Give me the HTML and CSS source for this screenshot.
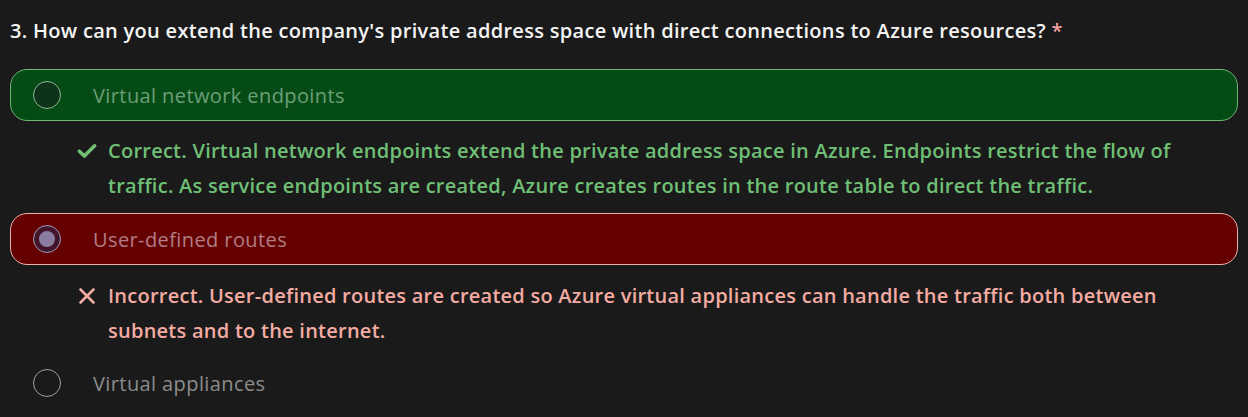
FILE: index.html
```html
<!DOCTYPE html>
<html lang="en">
<head>
<meta charset="utf-8">
<title>Quiz question</title>
<link rel="stylesheet" href="styles.css">
</head>
<body>
<div class="question">
  <h2 class="q-title">3. How can you extend the company's private address space with direct connections to Azure resources? <span class="req">*</span></h2>
  <div class="options">
    <div class="option option-correct">
      <span class="radio"></span>
      <span class="opt-label">Virtual network endpoints</span>
    </div>
    <div class="feedback feedback-correct">
      <svg class="fb-icon" viewBox="0 0 20 20" width="20" height="20" aria-hidden="true"><path d="M2.4 10.2 L7.4 15 L17.6 4.8" fill="none" stroke="currentColor" stroke-width="3.6" stroke-linecap="round" stroke-linejoin="round"/></svg>
      <p class="fb-text">Correct. Virtual network endpoints extend the private address space in Azure. Endpoints restrict the flow of traffic. As service endpoints are created, Azure creates routes in the route table to direct the traffic.</p>
    </div>
    <div class="option option-wrong">
      <span class="radio radio-checked"></span>
      <span class="opt-label">User-defined routes</span>
    </div>
    <div class="feedback feedback-wrong">
      <svg class="fb-icon" viewBox="0 0 20 20" width="20" height="20" aria-hidden="true"><path d="M3.5 3.5 L16.5 16.5 M16.5 3.5 L3.5 16.5" fill="none" stroke="currentColor" stroke-width="2.6" stroke-linecap="round"/></svg>
      <p class="fb-text">Incorrect. User-defined routes are created so Azure virtual appliances can handle the traffic both between subnets and to the internet.</p>
    </div>
    <div class="option option-plain">
      <span class="radio"></span>
      <span class="opt-label">Virtual appliances</span>
    </div>
  </div>
</div>
</body>
</html>
```
FILE: styles.css
```css
html, body {
  margin: 0;
  padding: 0;
  background: #1a1a1a;
}
body {
  font-family: "Open Sans", "Noto Sans", "Liberation Sans", sans-serif;
  color: #f2f2f2;
}
.question {
  padding: 14px 10px 0 10px;
}
.q-title {
  margin: 0;
  font-size: 20px;
  font-weight: 600;
  line-height: 34px;
  letter-spacing: 0.3px;
  color: #f4f4f4;
}
.req {
  color: #f0a3a0;
}
.options {
  margin-top: 21px;
  width: 1228px;
}
.option {
  display: flex;
  align-items: center;
  height: 50px;
  border: 1px solid transparent;
  border-radius: 17px;
  padding-left: 22px;
  gap: 32px;
  font-size: 20px;
  letter-spacing: 0.4px;
}
.radio {
  box-sizing: border-box;
  width: 28px;
  height: 28px;
  border-radius: 50%;
  border: 1.5px solid #9a9a9a;
  flex: none;
}
.option-correct {
  background: #054b16;
  border-color: #6cb66f;
  color: #6d9f77;
}
.option-correct .radio {
  background: #0f331a;
  border-color: #8cb890;
}
.option-wrong {
  background: #650000;
  border-color: #eab0ae;
  color: #b27d86;
}
.radio-checked {
  background: #8a7da0;
  border-color: #9488a6;
  box-shadow: inset 0 0 0 5px #44142a;
}
.option-plain {
  color: #8c8c8c;
}
.option-plain .radio {
  border-color: #a0a0a0;
}
.feedback {
  display: flex;
  align-items: flex-start;
  gap: 11px;
  padding: 12px 48px 10px 67px;
  font-size: 20px;
  font-weight: 600;
  line-height: 35px;
  letter-spacing: 0.25px;
}
.fb-icon {
  flex: none;
  margin-top: 8px;
}
.fb-text {
  margin: 0;
}
.feedback-correct {
  color: #6fbf75;
}
.feedback-wrong {
  color: #f3aba2;
  padding-top: 13px;
  padding-bottom: 9px;
}
```
